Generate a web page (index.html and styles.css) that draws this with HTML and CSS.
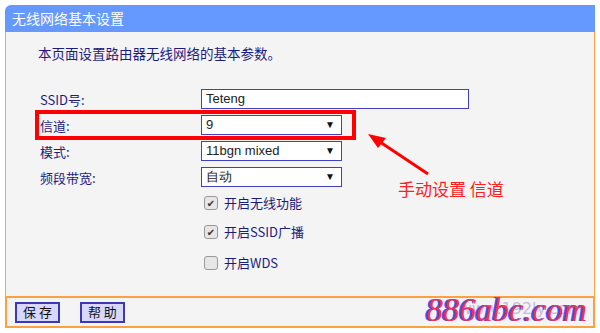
FILE: index.html
```html
<!DOCTYPE html>
<html>
<head>
    <meta charset="utf-8">
    <title>无线网络基本设置</title>
    <link rel="stylesheet" href="styles.css">
</head>
<body>
    <div class="panel">
        <div class="title">无线网络基本设置</div>
        <div class="content">
            <p class="intro">本页面设置路由器无线网络的基本参数。</p>
            <div class="rows">
                <div class="row">
                    <label class="name">SSID号:</label>
                    <div class="field text">Teteng</div>
                </div>
                <div class="row">
                    <label class="name">信道:</label>
                    <div class="field sel">9<span class="arr">&#9660;</span></div>
                </div>
                <div class="row">
                    <label class="name">模式:</label>
                    <div class="field sel">11bgn mixed<span class="arr">&#9660;</span></div>
                </div>
                <div class="row">
                    <label class="name">频段带宽:</label>
                    <div class="field sel">自动<span class="arr">&#9660;</span></div>
                </div>
            </div>
            <div class="checks">
                <div class="check"><span class="box on">&#10004;</span>开启无线功能</div>
                <div class="check"><span class="box on">&#10004;</span>开启SSID广播</div>
                <div class="check"><span class="box"></span>开启WDS</div>
            </div>
            <div class="mark"></div>
            <svg class="arrow" width="80" height="60" viewBox="0 0 80 60">
                <path d="M62 44 L8 8" stroke="#ff0000" stroke-width="3" fill="none"/>
                <path d="M2 4 L20 8 L12 18 Z" fill="#ff0000"/>
            </svg>
            <div class="note">手动设置 信道</div>
        </div>
        <div class="footer">
            <button class="btn">保 存</button>
            <button class="btn">帮 助</button>
            <div class="logo"><span class="ghost">www.192ly.com</span><span class="brand">886abc.com</span></div>
        </div>
    </div>
</body>
</html>
```

FILE: styles.css
```css
body { margin: 0; background: #fff; font-family: "Noto Sans CJK SC", "DejaVu Sans", sans-serif; }
.panel { width: 590px; margin: 5px 0 0 5px; height: 323px; box-sizing: border-box; display: flex; flex-direction: column; }
.title { height: 27px; background: #6699ff; color: #fff; font-size: 14px; line-height: 27px; padding-left: 7px; border-top-left-radius: 6px; }
.content { position: relative; flex: 1; background: #f4f4f4; border-left: 1px solid #ffa040; border-right: 1px solid #ffa040; border-bottom: 2px solid #ffa040; }
.intro { margin: 11px 0 0 32px; font-size: 13.5px; color: #1c1c80; }
.rows { margin-top: 23px; }
.row { display: flex; align-items: center; height: 26px; }
.name { width: 161px; padding-left: 34px; font-size: 13px; color: #1c1c80; }
.field { box-sizing: border-box; height: 20px; border: 1px solid #4040c0; background: #fff; font-family: "Liberation Sans", sans-serif; font-size: 13px; color: #222; line-height: 18px; padding-left: 4px; }
.text { width: 268px; }
.sel { width: 141px; display: flex; justify-content: space-between; }
.arr { font-size: 10px; padding-right: 6px; color: #111; }
.checks { margin: -2px 0 0 198px; }
.check { display: flex; align-items: center; height: 29px; font-size: 13px; color: #1c1c80; }
.check:last-child { height: 33px; }
.box { width: 12px; height: 12px; border: 1px solid #999; border-radius: 3px; background: #e6e6e6; margin-right: 6px; font-size: 10px; line-height: 12px; text-align: center; color: #333; }
.mark { position: absolute; left: 29px; top: 78px; width: 313px; height: 22px; border: 4px solid #ff0000; }
.arrow { position: absolute; left: 360px; top: 98px; }
.note { position: absolute; left: 392px; top: 144px; font-size: 17px; color: #ff2020; }
.footer { display: flex; align-items: center; height: 28px; background: #f4f4f4; border: 2px solid #ffa040; border-top: none; padding-left: 8px; position: relative; }
.btn { font-family: "Noto Sans CJK SC", sans-serif; font-size: 13px; background: #d8d8ff; border: 2px solid #3a3ab8; padding: 0 6px; height: 21px; line-height: 16px; margin-right: 20px; color: #111; }
.logo { position: absolute; right: 6px; bottom: 0; }
.ghost { position: absolute; right: 4px; bottom: 8px; font-family: "DejaVu Sans", sans-serif; font-size: 16px; color: #cbbbdb; }
.brand { position: relative; font-family: "Liberation Serif", serif; font-style: italic; font-size: 33px; line-height: 30px; color: #ee3355; text-shadow: -2px 0 #4455ff; }
```
